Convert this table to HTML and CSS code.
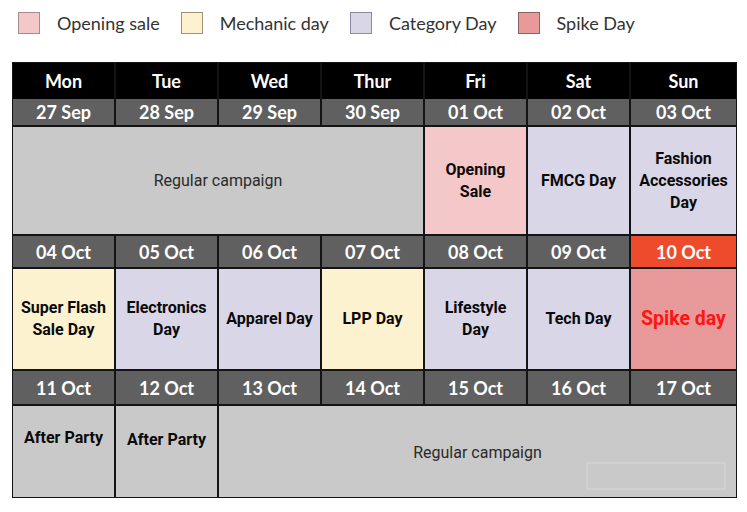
FILE: index.html
```html
<!DOCTYPE html>
<html>
<head>
<meta charset="utf-8">
<link rel="stylesheet" href="styles.css">
</head>
<body>
<div class="legend">
  <div class="legend-item"><span class="swatch sw-open"></span><span>Opening sale</span></div>
  <div class="legend-item"><span class="swatch sw-mech"></span><span>Mechanic day</span></div>
  <div class="legend-item"><span class="swatch sw-cat"></span><span>Category Day</span></div>
  <div class="legend-item"><span class="swatch sw-spike"></span><span>Spike Day</span></div>
</div>
<div class="calendar">
  <div class="hd">Mon</div><div class="hd">Tue</div><div class="hd">Wed</div><div class="hd">Thur</div><div class="hd">Fri</div><div class="hd">Sat</div><div class="hd">Sun</div>

  <div class="dt">27 Sep</div><div class="dt">28 Sep</div><div class="dt">29 Sep</div><div class="dt">30 Sep</div><div class="dt">01 Oct</div><div class="dt">02 Oct</div><div class="dt">03 Oct</div>

  <div class="cell regular span4">Regular campaign</div>
  <div class="cell open">Opening<br>Sale</div>
  <div class="cell cat">FMCG Day</div>
  <div class="cell cat">Fashion<br>Accessories<br>Day</div>

  <div class="dt">04 Oct</div><div class="dt">05 Oct</div><div class="dt">06 Oct</div><div class="dt">07 Oct</div><div class="dt">08 Oct</div><div class="dt">09 Oct</div><div class="dt dt-spike">10 Oct</div>

  <div class="cell mech">Super Flash<br>Sale Day</div>
  <div class="cell cat">Electronics<br>Day</div>
  <div class="cell cat">Apparel Day</div>
  <div class="cell mech">LPP Day</div>
  <div class="cell cat">Lifestyle<br>Day</div>
  <div class="cell cat">Tech Day</div>
  <div class="cell spike">Spike day</div>

  <div class="dt">11 Oct</div><div class="dt">12 Oct</div><div class="dt">13 Oct</div><div class="dt">14 Oct</div><div class="dt">15 Oct</div><div class="dt">16 Oct</div><div class="dt">17 Oct</div>

  <div class="cell grey top1">After Party</div>
  <div class="cell grey top2">After Party</div>
  <div class="cell regular span5">Regular campaign<span class="mark"></span></div>
</div>
</body>
</html>
```

FILE: styles.css
```css
html, body {
  margin: 0;
  padding: 0;
  background: #ffffff;
}

.legend {
  display: flex;
  align-items: center;
  padding: 12px 0 0 18px;
  height: 22px;
  font-family: Lato, "Liberation Sans", sans-serif;
  font-size: 18px;
  color: #333333;
}

.legend-item {
  display: flex;
  align-items: center;
  gap: 17px;
  margin-right: 21px;
}

.swatch {
  width: 20px;
  height: 20px;
  box-sizing: content-box;
  border: 1px solid #8c8c8c;
  display: inline-block;
}
.sw-open { background: #f4c7c8; border-color: #a88c8c; }
.sw-mech { background: #fdf2cf; border-color: #9c9478; }
.sw-cat { background: #d9d6e8; border-color: #8c8aa0; }
.sw-spike { background: #e89a9a; border-color: #8c6464; }

.calendar {
  margin: 28px 0 0 12px;
  width: 723px;
  display: grid;
  grid-template-columns: repeat(6, 101px) 105px;
  grid-template-rows: 34px 26px 107px 31px 100px 33px 91px;
  gap: 2px;
  background: #141414;
  border: 1px solid #141414;
}

.hd {
  background: #000000;
  color: #ffffff;
  font-family: Lato, "Liberation Sans", sans-serif;
  font-weight: 700;
  font-size: 18px;
  display: flex;
  align-items: center;
  justify-content: center;
  margin-bottom: -2px;
}

.dt {
  background: #606060;
  color: #ffffff;
  font-family: Lato, "Liberation Sans", sans-serif;
  font-weight: 700;
  font-size: 18px;
  display: flex;
  align-items: center;
  justify-content: center;
}
.dt-spike { background: #ee4a2c; }

.cell {
  display: flex;
  align-items: center;
  justify-content: center;
  text-align: center;
  font-family: Roboto, "Liberation Sans", sans-serif;
  font-weight: 700;
  font-size: 16px;
  line-height: 22px;
  color: #0a0a0a;
}

.regular {
  background: #c9c9c9;
  font-weight: 400;
  font-size: 16px;
  color: #2a2a2a;
  position: relative;
}
.span4 { grid-column: span 4; }
.span5 { grid-column: span 5; padding-top: 3px; }

.open { background: #f4c7c8; }
.cat { background: #d9d6e8; }
.mech { background: #fdf2cf; }
.spike {
  background: #e89a9a;
  color: #ff1414;
  font-size: 19.5px;
}
.grey { background: #c9c9c9; align-items: flex-start; }
.top1 { padding-top: 21px; }
.top2 { padding-top: 23px; }

.mark {
  position: absolute;
  right: 10px;
  bottom: 7px;
  width: 136px;
  height: 24px;
  border: 2px solid #d2d2d2;
  border-radius: 2px;
}
```
